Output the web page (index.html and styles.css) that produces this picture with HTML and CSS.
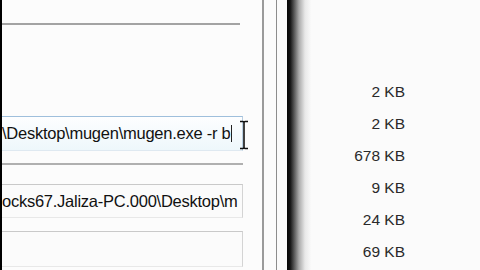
FILE: index.html
```html
<!DOCTYPE html>
<html>
<head>
<meta charset="utf-8">
<link rel="stylesheet" href="styles.css">
</head>
<body>
<div class="page">
  <div class="edge"></div>
  <div class="dialog">
    <div class="rule rule-top"></div>
    <div class="field field-focus">
      <span class="value">\Desktop\mugen\mugen.exe -r b</span><span class="caret"></span>
    </div>
    <div class="rule rule-mid"></div>
    <div class="field field-2">
      <span class="value">ocks67.Jaliza-PC.000\Desktop\m</span>
    </div>
    <div class="field field-3"></div>
    <svg class="ibeam" width="10" height="30" viewBox="0 0 10 30">
      <path d="M1 1.5 H4 M6 1.5 H9 M5 2 V28 M1 28.5 H4 M6 28.5 H9 M4 1.5 Q5 1.5 5 3 Q5 1.5 6 1.5 M4 28.5 Q5 28.5 5 27 Q5 28.5 6 28.5" stroke="#111" stroke-width="1.6" fill="none"/>
    </svg>
  </div>
  <div class="frame"></div>
  <div class="gap"></div>
  <div class="shadow"></div>
  <div class="list">
    <div class="sizes">
      <div class="size">2 KB</div>
      <div class="size">2 KB</div>
      <div class="size">678 KB</div>
      <div class="size">9 KB</div>
      <div class="size">24 KB</div>
      <div class="size">69 KB</div>
    </div>
  </div>
</div>
</body>
</html>
```
FILE: styles.css
```css
html, body {
  margin: 0;
  padding: 0;
  background: #fcfcfc;
}
.page {
  display: flex;
  width: 480px;
  height: 270px;
  overflow: hidden;
  background: #fcfcfc;
}
.edge {
  width: 2px;
  flex: none;
  background: #000;
}
.dialog {
  position: relative;
  width: 260px;
  flex: none;
  display: flex;
  flex-direction: column;
  background: #fcfcfc;
}
.rule {
  height: 2px;
  background: #a3a3a3;
}
.rule-top {
  width: 238px;
  margin-top: 23px;
}
.rule-mid {
  width: 241px;
  margin-top: 12px;
  background: #b0b0b0;
}
.field {
  width: 241px;
  box-sizing: border-box;
  border-top: 1px solid #c9c9c9;
  border-right: 1px solid #d4d4d4;
  border-bottom: 1px solid #e8e8e8;
  display: flex;
  align-items: center;
  font-family: "Liberation Sans", Arial, sans-serif;
  font-size: 16.5px;
  color: #111;
  white-space: nowrap;
  overflow: hidden;
}
.field-focus {
  margin-top: 91px;
  height: 35px;
  padding-bottom: 1px;
  border-top-color: #9fbfdc;
  border-right-color: #b9cfe2;
  border-bottom-color: #dfe9f1;
  background: linear-gradient(#fdfeff, #eef7fb);
}
.field-2 {
  margin-top: 19px;
  height: 34px;
  background: #fbfbfb;
}
.field-3 {
  margin-top: 13px;
  height: 36px;
  background: #fbfbfb;
}
.value {
  letter-spacing: -0.25px;
}
.caret {
  width: 1px;
  height: 17px;
  margin-left: 1px;
  background: #222;
}
.ibeam {
  position: absolute;
  left: 237px;
  top: 120px;
}
.frame {
  width: 12px;
  flex: none;
  border-left: 2px solid #9a9a9a;
  border-right: 1px solid #8c8c8c;
  background: #fbfbfb;
}
.gap {
  width: 10px;
  flex: none;
  background: #fafafa;
}
.shadow {
  width: 24px;
  flex: none;
  background: linear-gradient(to right, #050505 0px, #111 3px, #555 7px, #aaa 12px, #e8e8e8 18px, #fafafa 24px);
}
.list {
  flex: 1;
  background: #fbfbfb;
}
.sizes {
  width: 94px;
  padding-top: 76px;
  text-align: right;
  font-family: "Liberation Sans", Arial, sans-serif;
  font-size: 15.5px;
  line-height: 32px;
  color: #2a2a2a;
}
```
